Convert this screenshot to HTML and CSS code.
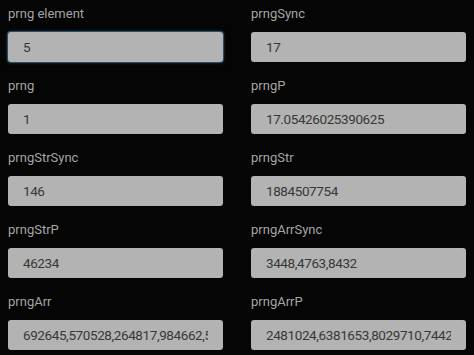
FILE: index.html
```html
<!DOCTYPE html>
<html lang="en">
<head>
  <meta charset="UTF-8" />
  <meta name="viewport" content="width=device-width, initial-scale=1.0"/>
  <title>prng fields</title>
  <link rel="stylesheet" href="styles.css">
</head>
<body>
  <div class="fields">
    <div class="field">
      <div class="field-label">prng element</div>
      <div class="field-input focused"><span class="value">5</span></div>
    </div>
    <div class="field">
      <div class="field-label">prngSync</div>
      <div class="field-input"><span class="value">17</span></div>
    </div>
    <div class="field">
      <div class="field-label">prng</div>
      <div class="field-input"><span class="value">1</span></div>
    </div>
    <div class="field">
      <div class="field-label">prngP</div>
      <div class="field-input"><span class="value">17.05426025390625</span></div>
    </div>
    <div class="field">
      <div class="field-label">prngStrSync</div>
      <div class="field-input"><span class="value">146</span></div>
    </div>
    <div class="field">
      <div class="field-label">prngStr</div>
      <div class="field-input"><span class="value">1884507754</span></div>
    </div>
    <div class="field">
      <div class="field-label">prngStrP</div>
      <div class="field-input"><span class="value">46234</span></div>
    </div>
    <div class="field">
      <div class="field-label">prngArrSync</div>
      <div class="field-input"><span class="value">3448,4763,8432</span></div>
    </div>
    <div class="field">
      <div class="field-label">prngArr</div>
      <div class="field-input"><span class="value">692645,570528,264817,984662,589011</span></div>
    </div>
    <div class="field">
      <div class="field-label">prngArrP</div>
      <div class="field-input"><span class="value">2481024,6381653,8029710,7442310</span></div>
    </div>
  </div>
</body>
</html>
```

FILE: styles.css
```css
html, body { background: #050505; }
body { margin: 0; padding: 0 8px; font-family: Roboto, "Noto Sans", sans-serif; }

.fields {
  display: grid;
  grid-template-columns: minmax(0, 1fr) minmax(0, 1fr);
  column-gap: 28px;
}

.field { display: flex; flex-direction: column; padding-top: 4px; height: 72px; box-sizing: border-box; min-width: 0; }

.field-label {
  color: #a4a4a4;
  font-size: 13px;
  line-height: 20px;
  margin-bottom: 8px;
}

.field-input {
  display: flex;
  align-items: center;
  height: 30px;
  box-sizing: border-box;
  padding: 0 15px;
  border-radius: 3px;
  background: #b2b3b2;
  color: #383838;
  font-size: 13.5px;
  letter-spacing: -0.4px;
}

.field-input .value { flex: 1; min-width: 0; overflow: hidden; white-space: nowrap; }

.field-input.focused {
  box-shadow: 0 0 0 1px #2b4c61, 0 0 3px 1px #173446;
}
```
